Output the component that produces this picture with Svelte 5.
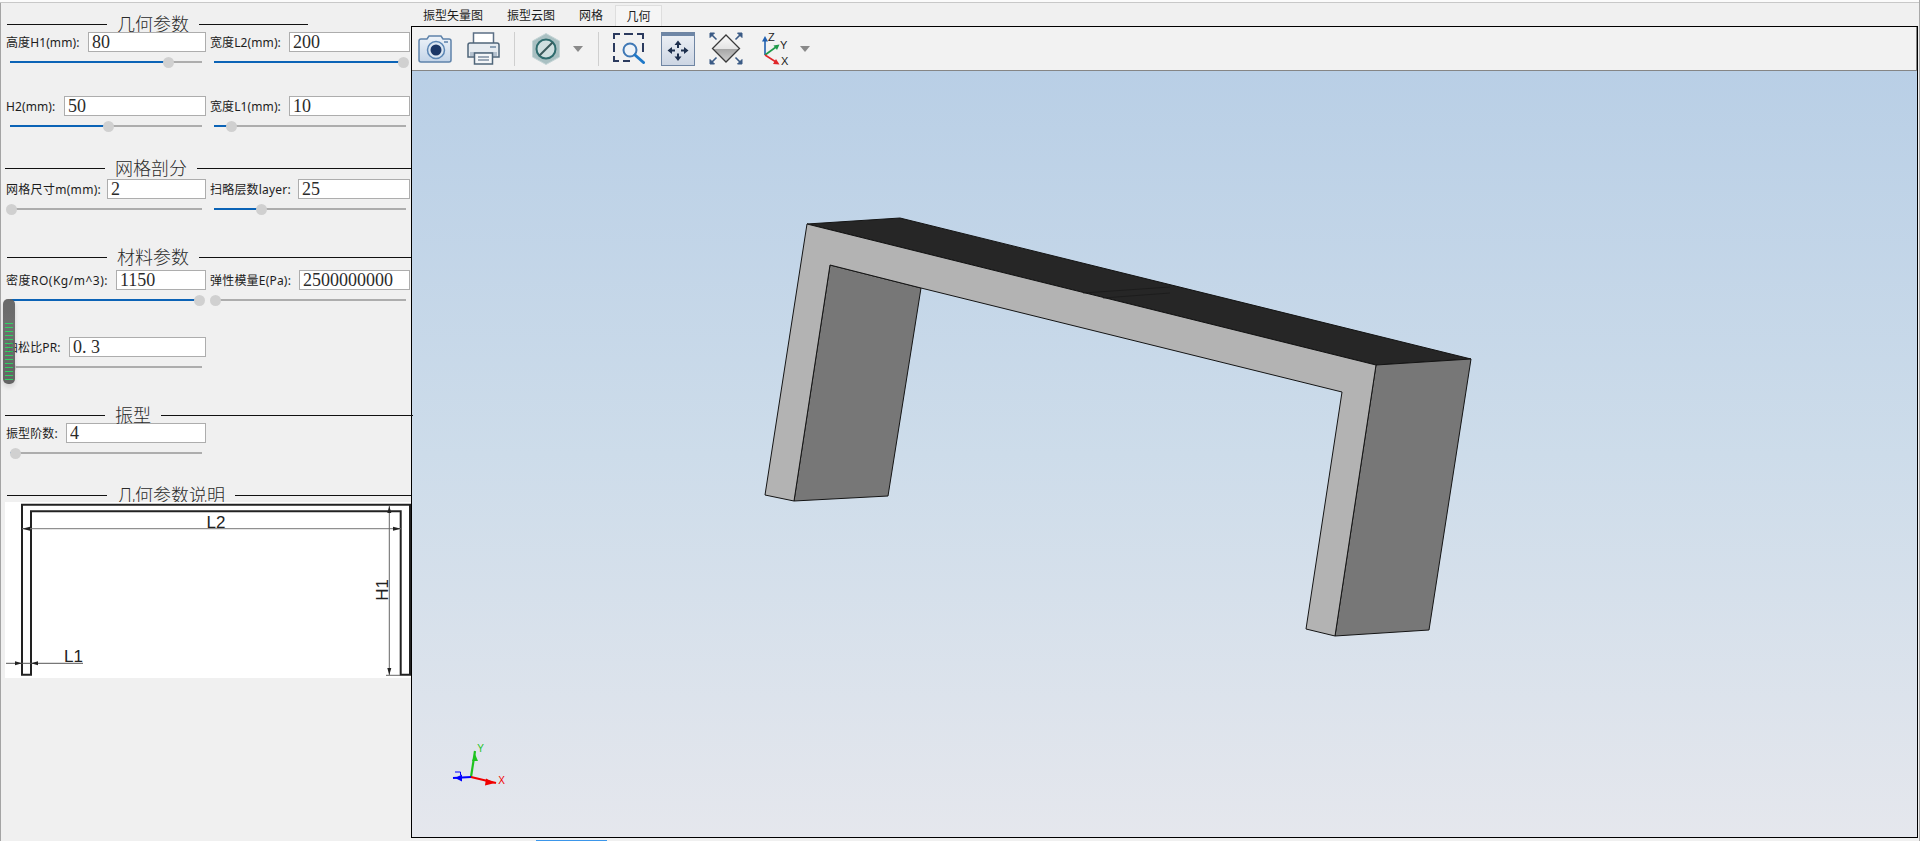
<script>
  const TRACK = 192;
  const sections = [
    { key: 's1', title: '几何参数', rows: [
      { label: '高度H1(mm):', w: 82, value: '80', t: 158 },
      { label: '宽度L2(mm):', w: 79, value: '200', t: 189 },
      { label: 'H2(mm):', w: 58, value: '50', t: 98 },
      { label: '宽度L1(mm):', w: 79, value: '10', t: 17 }
    ]},
    { key: 's2', title: '网格剖分', rows: [
      { label: '网格尺寸m(mm):', w: 101, value: '2', t: 1, ls: 0.3 },
      { label: '扫略层数layer:', w: 88, value: '25', t: 47, ls: 0.2 }
    ]},
    { key: 's3', title: '材料参数', rows: [
      { label: '密度RO(Kg/m^3):', w: 110, value: '1150', t: 189, ls: 0.5 },
      { label: '弹性模量E(Pa):', w: 89, value: '2500000000', t: 1, ls: 0.2 },
      { label: '泊松比PR:', w: 63, value: '0. 3', t: 0 }
    ]},
    { key: 's4', title: '振型', rows: [
      { label: '振型阶数:', w: 60, value: '4', t: 5 }
    ]}
  ];
  const tabs = ['振型矢量图', '振型云图', '网格', '几何'];
  const pct = (t) => (t / TRACK) * 100 + '%';
</script>

<div class="window">
  <div class="top-strip"></div>
  <div class="main">
    <aside class="panel">
      {#each sections as sec}
        <section class="section {sec.key}">
          <div class="legend">
            <span class="rule left"></span>
            <span class="legend-text">{sec.title}</span>
            <span class="rule right"></span>
          </div>
          <div class="fields">
            {#each sec.rows as f}
              <div class="field">
                <div class="line">
                  <span class="label" style:width={f.w + 'px'} style:letter-spacing={(f.ls ?? 0.1) + 'px'}>{f.label}</span>
                  <input class="value" readonly value={f.value} />
                </div>
                <div class="slider">
                  <div class="fill" style:width={pct(f.t)}></div>
                  <div class="thumb" style:left={pct(f.t)}></div>
                </div>
              </div>
            {/each}
          </div>
        </section>
      {/each}

      <section class="section s5">
        <div class="legend">
          <span class="rule left"></span>
          <span class="legend-text">几何参数说明</span>
          <span class="rule right"></span>
        </div>
        <svg class="diagram" viewBox="5 502 406 176" width="406" height="176">
          <rect x="5" y="502" width="406" height="176" fill="#fff" />
          <path d="M22 504.7H410V674.7H400.7V511.3H31V674.7H22Z" fill="none" stroke="#222" stroke-width="2" />
          <path d="M22 528.7H401" stroke="#777" stroke-width="1" fill="none" />
          <path d="M22 528.7l8-2v4zM401 528.7l-8-2v4z" fill="#222" />
          <text x="216" y="527.5" class="dim" text-anchor="middle">L2</text>
          <path d="M6 663.3H83" stroke="#555" stroke-width="1" fill="none" />
          <path d="M22 663.3l-7-2v4zM31 663.3l7-2v4z" fill="#222" />
          <text x="73.5" y="662" class="dim" text-anchor="middle">L1</text>
          <path d="M389.3 506V675M386 675.3H400" stroke="#666" stroke-width="1" fill="none" />
          <path d="M389.3 506l-2 7h4zM389.3 675l-2-7h4z" fill="#222" />
          <text class="dim" text-anchor="middle" transform="translate(388 590) rotate(-90)">H1</text>
        </svg>
      </section>

      <div class="scroll-widget"><div class="scroll-lines"></div></div>
    </aside>

    <div class="work">
      <nav class="tabs">
        {#each tabs as t, i}
          <span class="tab" class:active={i === 3}>{t}</span>
        {/each}
      </nav>

      <div class="frame">
        <div class="toolbar">
          <svg class="ic camera" width="34" height="30" viewBox="0 0 34 30">
            <defs>
              <linearGradient id="camg" x1="0" y1="0" x2="0" y2="1"><stop offset="0" stop-color="#eef3f9" /><stop offset="1" stop-color="#c3d4e8" /></linearGradient>
            </defs>
            <path d="M3 5H9L11 2H23L25 5H31Q33 5 33 7V26Q33 28 31 28H3Q1 28 1 26V7Q1 5 3 5Z" fill="url(#camg)" stroke="#5f83aa" stroke-width="1.5" />
            <circle cx="18" cy="16" r="8.5" fill="#dbe6f2" stroke="#5b86b5" stroke-width="1.5" />
            <circle cx="18" cy="16" r="5.5" fill="#1b3767" />
            <rect x="26" y="7" width="4" height="2" fill="#7d9bbd" />
          </svg>
          <svg class="ic printer" width="33" height="33" viewBox="0 0 33 33">
            <rect x="6.5" y="1" width="20" height="12" fill="#fff" stroke="#5b6f85" stroke-width="1.5" />
            <path d="M3 11H30Q32 11 32 13V25H1V13Q1 11 3 11Z" fill="#e6ebf0" stroke="#4f6579" stroke-width="1.5" />
            <rect x="3" y="20" width="27" height="4" fill="#b5c2cf" />
            <rect x="23" y="14" width="6" height="2" fill="#8ba0b5" />
            <rect x="7.5" y="21" width="18" height="11" fill="#f4f6f8" stroke="#4f6579" stroke-width="1.5" />
            <path d="M11 25H22M11 28H22" stroke="#7d8fa1" stroke-width="1.5" />
          </svg>
          <span class="sep s-a"></span>
          <svg class="ic hex" width="28" height="32" viewBox="0 0 28 32">
            <path d="M14 0.5L27.5 8V24L14 31.5L0.5 24V8Z" fill="#a9c0c2" stroke="#c4d4d5" />
            <circle cx="14" cy="16" r="9.5" fill="#cfdfe0" stroke="#2e6b6d" stroke-width="2" />
            <path d="M7.5 22.5L20.5 9.5" stroke="#39595a" stroke-width="2" />
          </svg>
          <svg class="ic caret c-a" width="10" height="6" viewBox="0 0 10 6"><path d="M0 0H10L5 6Z" fill="#8a8a8a" /></svg>
          <span class="sep s-b"></span>
          <svg class="ic zoombox" width="32" height="31" viewBox="0 0 32 31">
            <path d="M1 6V1H7M11 1H20M24 1H30V6M30 10V19M1 10V19M1 23V28H6M10 28H17" fill="none" stroke="#2b3a5e" stroke-width="2" />
            <circle cx="17" cy="17" r="6.5" fill="#eef3f8" stroke="#3f78b5" stroke-width="2" />
            <path d="M22 22L30.5 29.5" stroke="#1e78c8" stroke-width="3" stroke-linecap="round" />
          </svg>
          <svg class="ic pan" width="34" height="34" viewBox="0 0 34 34">
            <defs>
              <linearGradient id="pang" x1="0" y1="0" x2="0" y2="1"><stop offset="0" stop-color="#eef1f6" /><stop offset="1" stop-color="#ccd5e3" /></linearGradient>
            </defs>
            <rect x="0.5" y="0.5" width="33" height="33" fill="url(#pang)" stroke="#6f85a3" />
            <rect x="1" y="1" width="32" height="3" fill="#6e86a6" />
            <path d="M17 8.5l3.5 4.5h-2.5v3h-2v-3h-2.5zM17 29l3.5-4.5h-2.5v-3h-2v3h-2.5zM6.5 18.5l4.5-3.5v2.5h3v2h-3v2.5zM27.5 18.5l-4.5-3.5v2.5h-3v2h3v2.5z" fill="#1d2f4e" />
          </svg>
          <svg class="ic fit" width="34" height="33" viewBox="0 0 34 33">
            <defs>
              <linearGradient id="fitg" x1="0" y1="0" x2="0" y2="1"><stop offset="0" stop-color="#fbfbfb" /><stop offset="0.5" stop-color="#e4e4e4" /><stop offset="0.5" stop-color="#a4a4a4" /><stop offset="1" stop-color="#d0d0d0" /></linearGradient>
            </defs>
            <path d="M17 3L30.5 16.5L17 30L3.5 16.5Z" fill="url(#fitg)" stroke="#3a3a3a" stroke-width="1.3" />
            <g fill="#3a5a85" stroke="#3a5a85">
              <path d="M1 1H5.5L1 5.5Z" /><path d="M33 1H28.5L33 5.5Z" /><path d="M1 32H5.5L1 27.5Z" /><path d="M33 32H28.5L33 27.5Z" />
              <path d="M2 2L7.5 7.5M32 2L26.5 7.5M2 31L7.5 25.5M32 31L26.5 25.5" stroke-width="1.6" fill="none" />
            </g>
          </svg>
          <svg class="ic axes" width="32" height="34" viewBox="0 0 32 34">
            <path d="M6 23V7" stroke="#1f5fb0" stroke-width="1.6" />
            <path d="M6 4l3 5.5h-6z" fill="#1f5fb0" />
            <path d="M6 23L17 15" stroke="#1f9a4a" stroke-width="1.6" />
            <path d="M20.5 12.5l-2.5 5.5-3.5-4.5z" fill="#1f9a4a" />
            <path d="M6 23L17 30" stroke="#e0262a" stroke-width="1.6" />
            <path d="M20.5 32.5l-6.5-.5 3-5z" fill="#e0262a" />
            <text x="9" y="9" class="ax">Z</text>
            <text x="21" y="17" class="ax">Y</text>
            <text x="22" y="33" class="ax">X</text>
          </svg>
          <svg class="ic caret c-b" width="10" height="6" viewBox="0 0 10 6"><path d="M0 0H10L5 6Z" fill="#8a8a8a" /></svg>
        </div>

        <div class="canvas">
          <svg viewBox="412 71 1505 766" width="1505" height="766">
            <g stroke="#141414" stroke-width="1" stroke-linejoin="miter">
              <polygon points="807,224 900,218 1471,359 1376,365" fill="#262626" />
              <polygon points="830,265 921,288 888,496 794,501" fill="#777777" />
              <polygon points="1376,365 1471,359 1429,630 1335,636" fill="#777777" />
              <polygon points="807,224 1376,365 1335,636 1306,629 1342,392 921,288 830,265 794,501 765,495" fill="#b3b3b3" />
            </g>
            <path d="M1083 293L1170 287M1103 298L1170 293" stroke="#1a1a1a" stroke-width="0.8" />
            <g fill="none" stroke-width="2.2">
              <path d="M471 777L475 751" stroke="#1fc31f" />
              <path d="M471 777L453 778" stroke="#0000ff" />
              <path d="M471 777L496 783" stroke="#f00000" />
            </g>
            <path d="M475 754l-3 7h6z" fill="#1fc31f" />
            <path d="M455 778l7-3.5v7z" fill="#0000ff" />
            <path d="M495 783l-9-4.5-1 7z" fill="#f00000" />
            <text x="480.5" y="751.5" class="tri g" text-anchor="middle">Y</text>
            <text x="501.5" y="784" class="tri r" text-anchor="middle">X</text>
            <path d="M455 772H460.5V775" stroke="#0000ff" fill="none" />
          </svg>
        </div>
      </div>
      <div class="status"><span class="blip"></span></div>
    </div>
  </div>
</div>

<style>
  :global(body) { margin: 0; background: #f0f0f0; }
  .window {
    width: 1920px; height: 841px; background: #f0f0f0; overflow: hidden;
    box-sizing: border-box; border-right: 1px solid #a9a9a9;
    display: flex; flex-direction: column; position: relative;
    font-family: "Noto Sans", "Noto Sans CJK SC", sans-serif; color: #1c1c1c;
  }
  .top-strip { height: 3px; flex: none; background: linear-gradient(#fbfbfb 0 2px, #c8c8c8 2px); }
  .main { flex: 1; display: flex; min-height: 0; }

  .panel {
    width: 411px; flex: none; box-sizing: border-box; position: relative;
    border-left: 1px solid #a4a4a4; padding-left: 5px;
  }
  .legend { height: 14px; display: flex; align-items: center; }
  .rule { height: 1px; background: #111; }
  .rule.left { width: 100px; flex: none; }
  .rule.right { flex: 1; }
  .legend-text {
    font: 300 18px/14px "Noto Sans CJK SC", sans-serif; color: #2a2a2a;
    margin: 0 10px 2px; white-space: nowrap;
  }
  .fields { display: grid; grid-template-columns: 200px 200px; column-gap: 4px; row-gap: 24px; }
  .line { height: 20px; display: flex; align-items: center; }
  .label { flex: none; font-size: 12px; line-height: 20px; padding-top: 2px; white-space: nowrap; }
  .value {
    flex: 1; min-width: 0; height: 20px; box-sizing: border-box; margin: 0;
    border: 1px solid #adadad; background: #fff; padding: 1px 3px 0; outline: none;
    font: 18px/17px "Liberation Serif", serif; color: #2b2b2b; border-radius: 0;
  }
  .slider { position: relative; height: 2px; margin: 9px 4px; background: #adadad; }
  .fill { position: absolute; left: 0; top: 0; height: 2px; background: #0b63b6; }
  .thumb {
    position: absolute; top: -4.5px; width: 11px; height: 11px; margin-left: -5.5px;
    border-radius: 50%; background: #d0d0d0;
  }

  .s1 { margin-top: 14px; }
  .s1 .legend { padding-left: 1px; width: 301px; }
  .s1 .fields { margin-top: 1px; }
  .s2 { margin-top: 25px; }
  .s2 .legend { margin-left: -1px; }
  .s2 .fields { margin-top: 4px; }
  .s3 { margin-top: 31px; }
  .s3 .legend { padding-left: 1px; }
  .s3 .fields { margin-top: 6px; row-gap: 27px; }
  .s4 { margin-top: 31px; }
  .s4 .legend { margin-left: -1px; margin-right: -2px; position: relative; z-index: 2; }
  .s4 .fields { margin-top: 1px; }
  .s5 { margin-top: 25px; }
  .s5 .legend { padding-left: 1px; }
  .diagram { display: block; margin-left: -1px; }
  .dim { font: 17px "Liberation Sans", sans-serif; fill: #222; }

  .scroll-widget {
    position: absolute; left: 2px; top: 296px; width: 12px; height: 85px;
    background: linear-gradient(#5f5f5f, #666 30%, #5a5a5a); border-radius: 5px; opacity: .93;
    box-shadow: 0 3px 4px rgba(0,0,0,.12);
  }
  .scroll-lines {
    position: absolute; left: 2px; right: 2px; top: 24px; bottom: 4px;
    background: repeating-linear-gradient(#22d158 0 1px, transparent 1px 4px);
  }

  .work { flex: 1; min-width: 0; display: flex; flex-direction: column; }
  .tabs { height: 23px; flex: none; display: flex; align-items: flex-end; font-size: 12px; }
  .tab { padding: 0 12px; height: 21px; line-height: 22px; white-space: nowrap; box-sizing: border-box; }
  .tab.active {
    padding: 0; width: 47px; text-align: center; line-height: 21px; background: #f5f5f5;
    border: 1px solid #dedede; border-bottom: none;
  }
  .frame {
    flex: 1; min-height: 0; display: flex; flex-direction: column;
    border: 1px solid #000; box-sizing: border-box; margin-right: 1px;
  }
  .toolbar {
    height: 44px; flex: none; box-sizing: border-box; background: #f2f2f2;
    border-bottom: 1px solid #858585; border-right: 1px solid #858585;
    display: flex; align-items: center; padding-left: 6px;
  }
  .ic { flex: none; display: block; }
  .printer { margin-left: 15px; }
  .sep { width: 1px; height: 34px; background: #cfcfcf; flex: none; }
  .s-a { margin-left: 14px; }
  .hex { margin-left: 17px; }
  .c-a { margin-left: 13px; }
  .s-b { margin-left: 15px; }
  .zoombox { margin-left: 14px; }
  .pan { margin-left: 16px; }
  .fit { margin-left: 14px; }
  .axes { margin-left: 16px; }
  .c-b { margin-left: 9px; }
  .ax { font: 11px "Liberation Sans", sans-serif; fill: #222; }
  .canvas {
    flex: 1; min-height: 0; overflow: hidden;
    background: linear-gradient(#b9cfe6, #cddcea 50%, #e5e7ed);
  }
  .canvas svg { display: block; }
  .tri { font: 10px "Liberation Sans", sans-serif; }
  .tri.g { fill: #1fc31f; }
  .tri.r { fill: #f00000; }
  .status { height: 3px; flex: none; position: relative; }
  .blip { position: absolute; left: 125px; bottom: 0; width: 71px; height: 1px; background: #3b96ea; }
</style>
